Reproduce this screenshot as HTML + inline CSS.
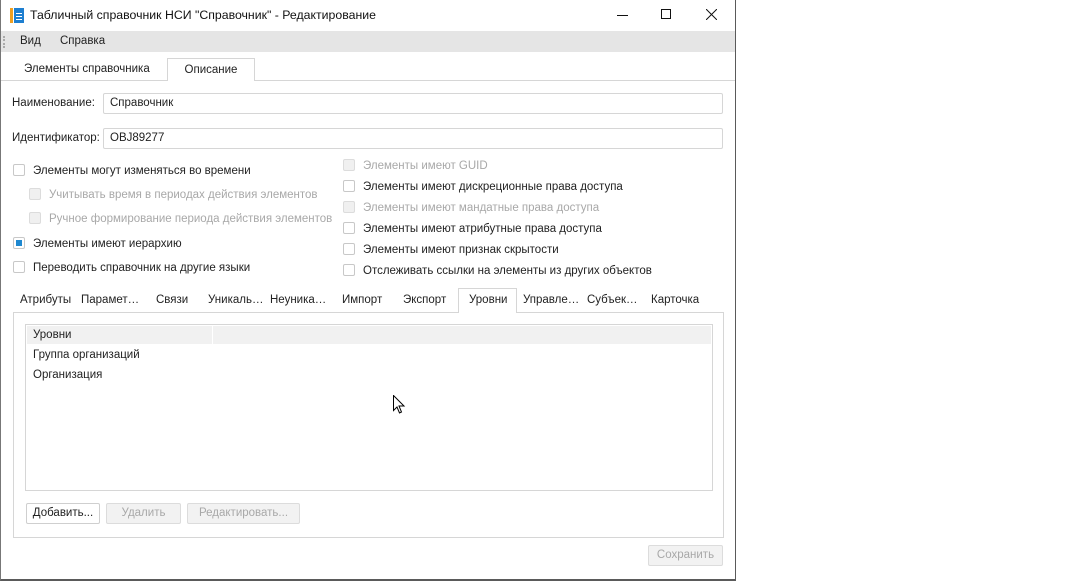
<!DOCTYPE html>
<html><head><meta charset="utf-8"><style>
*{box-sizing:border-box;margin:0;padding:0}
body{width:1066px;height:581px;background:#fff;font-family:"Liberation Sans",sans-serif;font-size:11.5px;color:#222;position:relative;overflow:hidden}
.a{position:absolute;white-space:nowrap}
.t{margin-top:1px}
.win{position:absolute;left:0;top:0;width:736px;height:581px;border-right:1px solid #5a5a5a;border-bottom:2px solid #5a5a5a;border-left:1px solid #777}
.cb{position:absolute;width:12px;height:12px;border:1px solid #c8c8c8;border-radius:2px;background:#fff}
.cb.d{background:#f0f0f0;border-color:#dcdcdc}
.dis{color:#a8a8a8}
.inp{position:absolute;height:21px;border:1px solid #d6d6d6;border-radius:2px;background:#fff;padding:3px 6px}
.btn{position:absolute;height:21px;border:1px solid #cfcfcf;border-radius:2px;background:#fff;text-align:center;line-height:19px}
.btn.d{background:#f2f2f2;color:#a8a8a8;border-color:#dcdcdc}
</style></head><body>
<div class="win"></div>
<div class="a" style="left:10px;top:8px;width:3px;height:15px;background:#f0a020"></div>
<div class="a" style="left:14px;top:8px;width:10px;height:15px;background:#1e7fd0"></div>
<div class="a" style="left:16px;top:13px;width:6px;height:1px;background:#fff;box-shadow:0 3px 0 #fff,0 6px 0 #fff"></div>
<div class="a" style="left:30px;top:8px;font-size:12.3px;color:#111">Табличный справочник НСИ "Справочник" - Редактирование</div>
<div class="a" style="left:617px;top:15px;width:11px;height:1px;background:#111"></div>
<div class="a" style="left:661px;top:9px;width:10px;height:10px;border:1px solid #111"></div>
<svg class="a" style="left:706px;top:9px" width="11" height="11"><path d="M0 0L11 11M11 0L0 11" stroke="#111" stroke-width="1"/></svg>
<div class="a" style="left:1px;top:31px;width:734px;height:21px;background:#e5e5e5"></div>
<div class="a" style="left:3px;top:36px;width:2px;height:12px;border-left:2px dotted #aaa"></div>
<div class="a" style="left:20px;top:35px">Вид</div>
<div class="a" style="left:60px;top:35px">Справка</div>
<div class="a" style="left:1px;top:80px;width:734px;height:1px;background:#d6d6d6"></div>
<div class="a" style="left:24px;top:63px">Элементы справочника</div>
<div class="a" style="left:167px;top:58px;width:88px;height:23px;border:1px solid #d6d6d6;border-bottom:none;background:#fff;text-align:center;line-height:22px">Описание</div>
<div class="a" style="left:12px;top:97px">Наименование:</div>
<div class="inp" style="left:103px;top:93px;width:620px">Справочник</div>
<div class="a" style="left:12px;top:132px">Идентификатор:</div>
<div class="inp" style="left:103px;top:128px;width:620px">OBJ89277</div>
<div class="cb" style="left:13px;top:164px"></div><div class="a t" style="left:33px;top:164px">Элементы могут изменяться во времени</div>
<div class="cb d" style="left:29px;top:188px"></div><div class="a dis t" style="left:49px;top:188px">Учитывать время в периодах действия элементов</div>
<div class="cb d" style="left:29px;top:212px"></div><div class="a dis t" style="left:49px;top:212px">Ручное формирование периода действия элементов</div>
<div class="cb" style="left:13px;top:237px"><div style="position:absolute;left:2px;top:2px;width:6px;height:6px;background:#1e88d0"></div></div><div class="a t" style="left:33px;top:237px">Элементы имеют иерархию</div>
<div class="cb" style="left:13px;top:261px"></div><div class="a t" style="left:33px;top:261px">Переводить справочник на другие языки</div>
<div class="cb d" style="left:343px;top:159px"></div><div class="a dis t" style="left:363px;top:159px">Элементы имеют GUID</div>
<div class="cb" style="left:343px;top:180px"></div><div class="a t" style="left:363px;top:180px">Элементы имеют дискреционные права доступа</div>
<div class="cb d" style="left:343px;top:201px"></div><div class="a dis t" style="left:363px;top:201px">Элементы имеют мандатные права доступа</div>
<div class="cb" style="left:343px;top:222px"></div><div class="a t" style="left:363px;top:222px">Элементы имеют атрибутные права доступа</div>
<div class="cb" style="left:343px;top:243px"></div><div class="a t" style="left:363px;top:243px">Элементы имеют признак скрытости</div>
<div class="cb" style="left:343px;top:264px"></div><div class="a t" style="left:363px;top:264px">Отслеживать ссылки на элементы из других объектов</div>
<div class="a" style="left:13px;top:312px;width:711px;height:226px;border:1px solid #d6d6d6"></div>
<div class="a" style="left:458px;top:288px;width:59px;height:25px;border:1px solid #d6d6d6;border-bottom:none;background:#fff"></div>
<div class="a" style="left:20px;top:294px">Атрибуты</div>
<div class="a" style="left:81px;top:294px">Парамет…</div>
<div class="a" style="left:156px;top:294px">Связи</div>
<div class="a" style="left:208px;top:294px">Уникаль…</div>
<div class="a" style="left:270px;top:294px">Неуника…</div>
<div class="a" style="left:342px;top:294px">Импорт</div>
<div class="a" style="left:403px;top:294px">Экспорт</div>
<div class="a" style="left:469px;top:294px">Уровни</div>
<div class="a" style="left:523px;top:294px">Управле…</div>
<div class="a" style="left:587px;top:294px">Субъек…</div>
<div class="a" style="left:651px;top:294px">Карточка</div>
<div class="a" style="left:25px;top:324px;width:688px;height:167px;border:1px solid #d6d6d6"></div>
<div class="a" style="left:27px;top:326px;width:684px;height:18px;background:#f1f1f1"></div>
<div class="a" style="left:212px;top:326px;width:1px;height:18px;background:#fff"></div>
<div class="a" style="left:33px;top:329px">Уровни</div>
<div class="a" style="left:33px;top:349px">Группа организаций</div>
<div class="a" style="left:33px;top:369px">Организация</div>
<svg class="a" style="left:393px;top:395px" width="13" height="20"><path d="M0.5 0.5V15.5L4 12L6.5 18L8.5 17L6 11H11Z" fill="#fff" stroke="#000" stroke-width="1"/></svg>
<div class="btn" style="left:26px;top:503px;width:74px">Добавить...</div>
<div class="btn d" style="left:106px;top:503px;width:75px">Удалить</div>
<div class="btn d" style="left:187px;top:503px;width:113px">Редактировать...</div>
<div class="btn d" style="left:648px;top:545px;width:75px">Сохранить</div>
</body></html>
